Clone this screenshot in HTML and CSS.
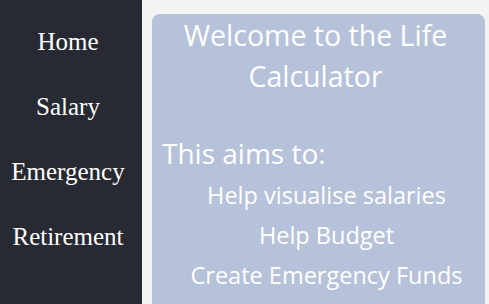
FILE: index.html
```html
<!DOCTYPE html>
<html>
<head>
<meta charset="utf-8">
<link rel="stylesheet" href="styles.css">
</head>
<body>
<div class="app">
  <nav class="sidebar">
    <a class="nav-link" href="#">Home</a>
    <a class="nav-link" href="#">Salary</a>
    <a class="nav-link" href="#">Emergency</a>
    <a class="nav-link" href="#">Retirement</a>
  </nav>
  <main class="main">
    <section class="card">
      <h1 class="title">Welcome to the Life Calculator</h1>
      <h2 class="subtitle">This aims to:</h2>
      <ul class="aims">
        <li>Help visualise salaries</li>
        <li>Help Budget</li>
        <li>Create Emergency Funds</li>
      </ul>
    </section>
  </main>
</div>
</body>
</html>
```

FILE: styles.css
```css
html, body {
  margin: 0;
  padding: 0;
  height: 100%;
  overflow: hidden;
}
body {
  background: #f3f3f3;
}
.app {
  display: flex;
  height: 100%;
}
.sidebar {
  width: 142px;
  flex: none;
  background: #272a33;
  display: flex;
  flex-direction: column;
  align-items: center;
  padding: 27px 6px 0 0;
  box-sizing: border-box;
  gap: 36px;
}
.nav-link {
  font-family: "Liberation Serif", "Times New Roman", serif;
  font-size: 25px;
  line-height: 29px;
  color: #ffffff;
  text-decoration: none;
}
.main {
  flex: 1;
  padding: 14px 4px 0 10px;
  min-width: 0;
}
.card {
  background: #b6c2da;
  border-radius: 8px;
  height: 400px;
  padding: 0 10px;
  color: #ffffff;
  font-family: "Open Sans", "Noto Sans", sans-serif;
}
.title {
  margin: 0;
  padding: 1px 6px 0 0;
  font-size: 28.5px;
  line-height: 41px;
  font-weight: 400;
  text-align: center;
}
.subtitle {
  margin: 37px 0 0;
  font-size: 28px;
  line-height: 38px;
  font-weight: 400;
}
.aims {
  list-style: none;
  margin: 3px 0 0;
  padding: 0 0 0 16px;
  text-align: center;
}
.aims li {
  font-size: 23.5px;
  line-height: 40px;
}
```
